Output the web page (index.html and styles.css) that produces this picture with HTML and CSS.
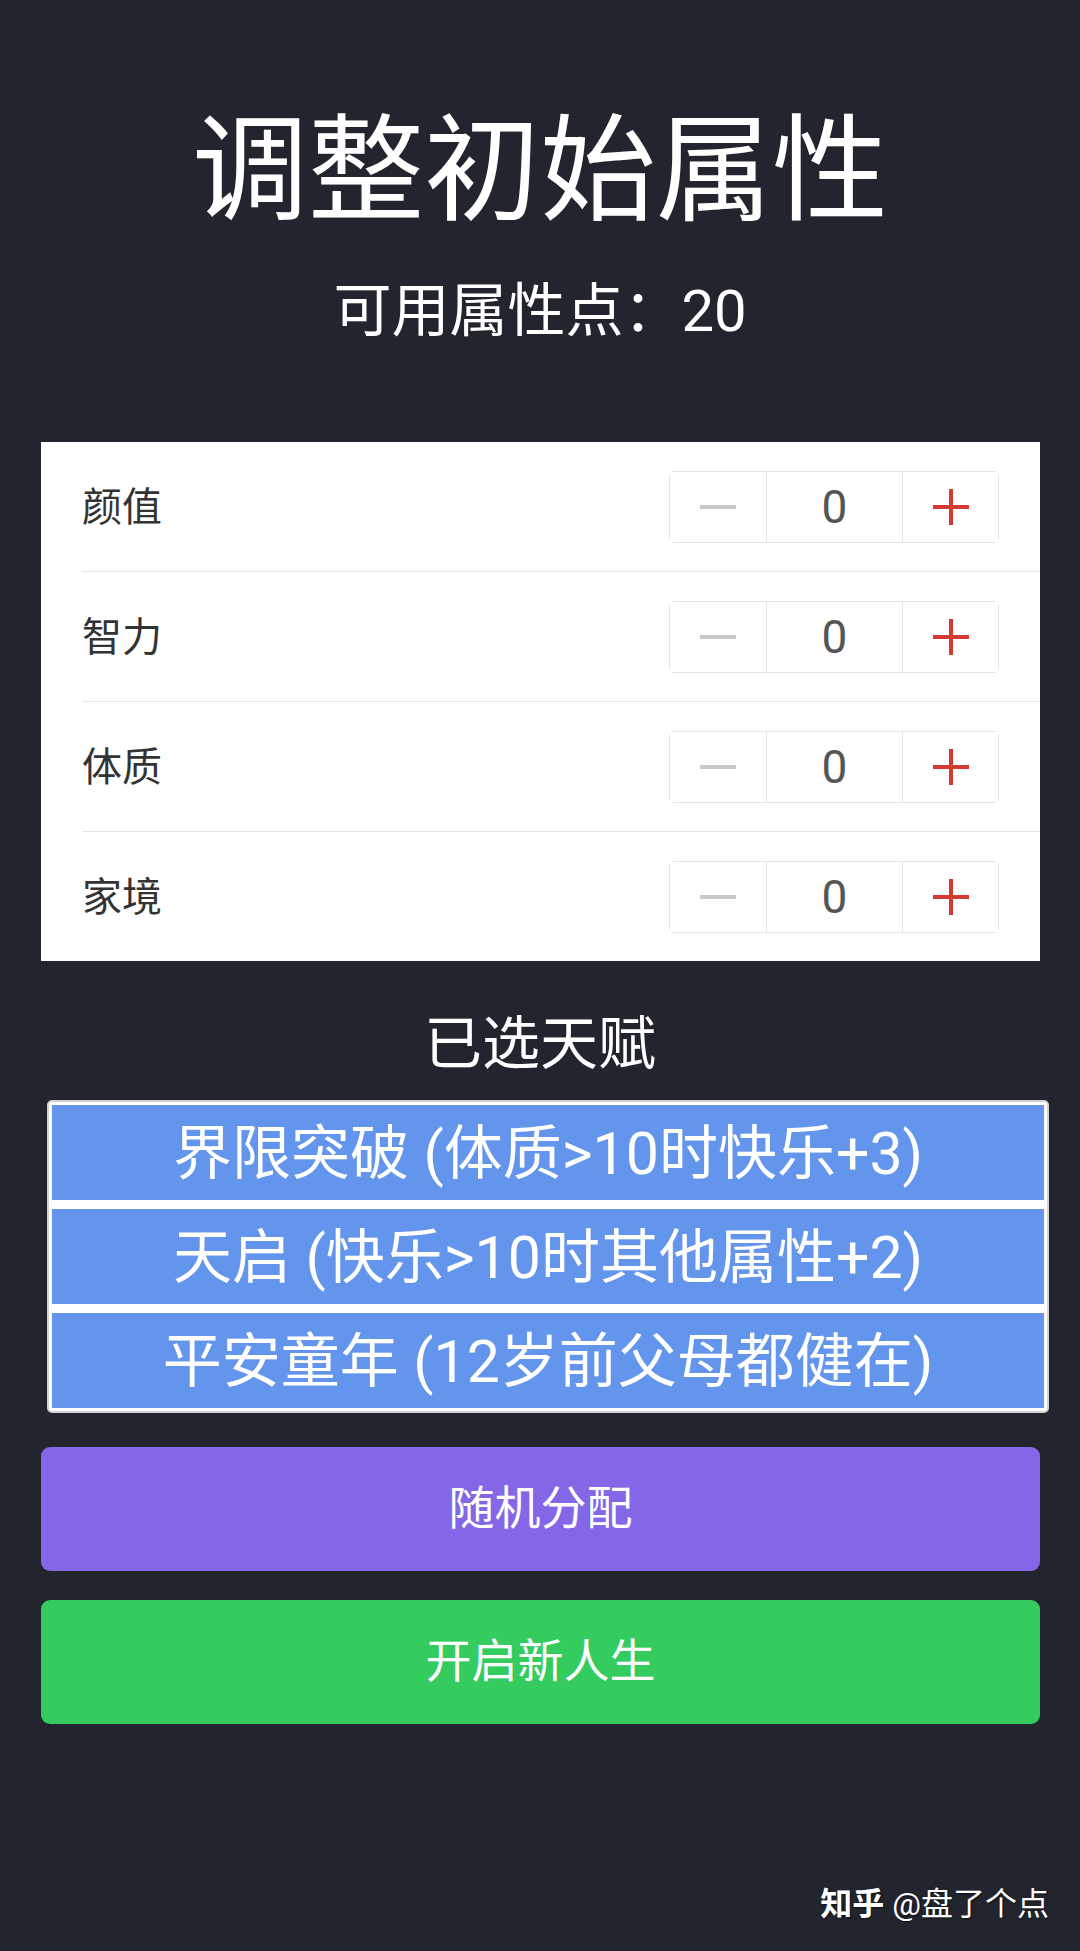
FILE: index.html
```html
<!DOCTYPE html>
<html lang="zh-CN">
<head>
  <meta charset="UTF-8" />
  <meta name="viewport" content="width=device-width, initial-scale=1.0" />
  <title>调整初始属性</title>
  <link rel="stylesheet" href="styles.css">
</head>
<body>

  <div class="header">
    <h1 class="title">调整初始属性</h1>
    <div class="points">可用属性点：20</div>
  </div>

  <ul class="attr-list">
    <li class="attr-row">
      <span class="attr-name">颜值</span>
      <div class="stepper">
        <button class="step minus"><svg width="38" height="38" viewBox="0 0 38 38"><line x1="1" y1="19" x2="37" y2="19" /></svg></button>
        <span class="value">0</span>
        <button class="step plus"><svg width="38" height="38" viewBox="0 0 38 38"><line x1="1" y1="19" x2="37" y2="19" /><line x1="19" y1="1" x2="19" y2="37" /></svg></button>
      </div>
    </li>
    <li class="attr-row">
      <span class="attr-name">智力</span>
      <div class="stepper">
        <button class="step minus"><svg width="38" height="38" viewBox="0 0 38 38"><line x1="1" y1="19" x2="37" y2="19" /></svg></button>
        <span class="value">0</span>
        <button class="step plus"><svg width="38" height="38" viewBox="0 0 38 38"><line x1="1" y1="19" x2="37" y2="19" /><line x1="19" y1="1" x2="19" y2="37" /></svg></button>
      </div>
    </li>
    <li class="attr-row">
      <span class="attr-name">体质</span>
      <div class="stepper">
        <button class="step minus"><svg width="38" height="38" viewBox="0 0 38 38"><line x1="1" y1="19" x2="37" y2="19" /></svg></button>
        <span class="value">0</span>
        <button class="step plus"><svg width="38" height="38" viewBox="0 0 38 38"><line x1="1" y1="19" x2="37" y2="19" /><line x1="19" y1="1" x2="19" y2="37" /></svg></button>
      </div>
    </li>
    <li class="attr-row">
      <span class="attr-name">家境</span>
      <div class="stepper">
        <button class="step minus"><svg width="38" height="38" viewBox="0 0 38 38"><line x1="1" y1="19" x2="37" y2="19" /></svg></button>
        <span class="value">0</span>
        <button class="step plus"><svg width="38" height="38" viewBox="0 0 38 38"><line x1="1" y1="19" x2="37" y2="19" /><line x1="19" y1="1" x2="19" y2="37" /></svg></button>
      </div>
    </li>
  </ul>

  <div class="talent-title">已选天赋</div>

  <ul class="talents">
    <li class="talent">界限突破 (体质&gt;10时快乐+3)</li>
    <li class="talent">天启 (快乐&gt;10时其他属性+2)</li>
    <li class="talent">平安童年 (12岁前父母都健在)</li>
  </ul>

  <button class="big-btn random">随机分配</button>
  <button class="big-btn start">开启新人生</button>

  <div class="watermark"><b>知乎</b> @盘了个点</div>

</body>
</html>
```

FILE: styles.css
```css
html, body {
  margin: 0;
  padding: 0;
  height: 100%;
}

body {
  background: #22252e;
  font-family: Roboto, "Noto Sans CJK SC", sans-serif;
  color: #fff;
  position: relative;
}

.header {
  padding-top: 101px;
  text-align: center;
}

.title {
  margin: 0;
  font-size: 116px;
  font-weight: normal;
  line-height: 140px;
}

.points {
  margin-top: 35px;
  font-size: 58px;
  line-height: 70px;
}

.attr-list {
  list-style: none;
  margin: 96px 40px 0 41px;
  padding: 0 0 0 41px;
  background: #fff;
}

.attr-row {
  height: 129px;
  display: flex;
  align-items: center;
  justify-content: space-between;
  padding-right: 41px;
  border-bottom: 1px solid #e6e6e6;
}

.attr-row:last-child {
  border-bottom: none;
}

.attr-name {
  font-size: 40px;
  color: #333;
  padding-bottom: 6px;
}

.stepper {
  display: flex;
  height: 72px;
  border: 1px solid #e4e4e4;
  border-radius: 5px;
  box-sizing: border-box;
}

.step {
  width: 96px;
  padding: 0;
  border: none;
  background: #fff;
  display: flex;
  align-items: center;
  justify-content: center;
}

.step.plus {
  width: 95px;
}

.step svg {
  stroke-width: 4;
}

.minus svg {
  stroke: #c9c9c9;
}

.plus svg {
  stroke: #d33a32;
}

.value {
  width: 137px;
  box-sizing: border-box;
  border-left: 1px solid #e4e4e4;
  border-right: 1px solid #e4e4e4;
  display: flex;
  align-items: center;
  justify-content: center;
  font-size: 46px;
  color: #555;
}

.talent-title {
  margin: 43px 0 16px;
  text-align: center;
  font-size: 58px;
  line-height: 80px;
}

.talents {
  list-style: none;
  margin: 0 31px 0 47px;
  padding: 3px;
  background: #fff;
  border: 2px solid #d2d2d2;
  border-radius: 5px;
}

.talent {
  height: 95px;
  box-sizing: border-box;
  padding-bottom: 8px;
  margin-bottom: 9px;
  background: #6495ed;
  display: flex;
  align-items: center;
  justify-content: center;
  font-size: 59px;
  color: #fff;
}

.talent:last-child {
  margin-bottom: 0;
}

.big-btn {
  display: block;
  width: 999px;
  height: 124px;
  margin: 0 0 0 41px;
  padding: 0 0 10px;
  border: none;
  border-radius: 9px;
  font-family: Roboto, "Noto Sans CJK SC", sans-serif;
  font-size: 46px;
  color: #fff;
}

.random {
  margin-top: 34px;
  background: #8467e6;
}

.start {
  margin-top: 29px;
  background: #35cc5f;
}

.watermark {
  position: absolute;
  right: 31px;
  top: 1884px;
  font-size: 32px;
  line-height: 40px;
  text-shadow: 1px 1px 2px rgba(0, 0, 0, 0.6);
}

.watermark b {
  font-weight: bold;
}
```
